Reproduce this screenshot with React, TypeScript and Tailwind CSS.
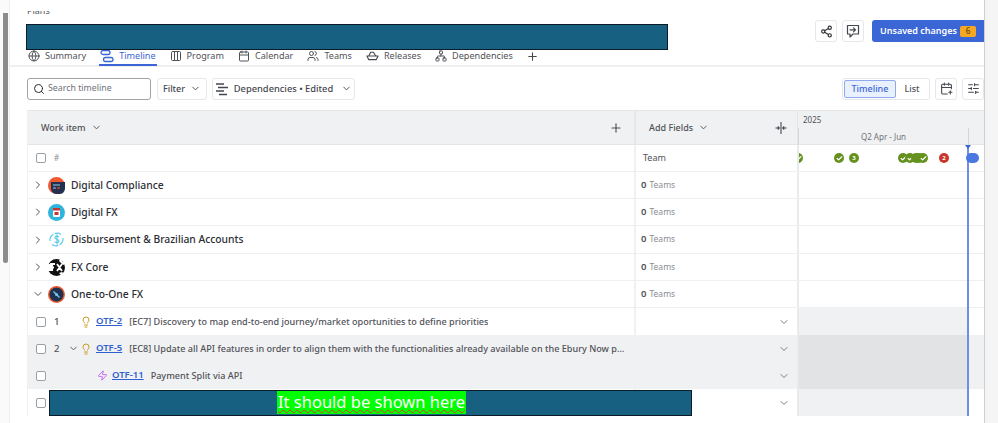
import React from "react";
import { Globe, Columns3, Calendar, Users, Network, Plus, Search, ChevronDown, ChevronRight, Lightbulb, Share2, CalendarPlus, SlidersHorizontal, Check, Zap } from "lucide-react";

const TimelineIcon = () => (
  <svg width="14" height="14" viewBox="0 0 14 14" fill="none" stroke="#3a66d6" strokeWidth="1.3">
    <rect x="1" y="1.500" width="9" height="4" rx="2" />
    <rect x="3.500" y="8.500" width="9.500" height="4" rx="2" />
  </svg>
);
const ReleaseIcon = () => (
  <svg width="13" height="13" viewBox="0 0 14 14" fill="none" stroke="#44474f" strokeWidth="1.2" strokeLinejoin="round">
    <path d="M1 7.500h12l-2 4H3z" />
    <path d="M3 7.500 5 3.500h3l2.500 4" />
  </svg>
);
const FeedbackIcon = () => (
  <svg width="14" height="14" viewBox="0 0 14 14" fill="none" stroke="#44474f" strokeWidth="1.2" strokeLinejoin="round" strokeLinecap="round">
    <path d="M4 10v3l3-3h5.500V1.500h-11V10z" />
    <path d="M4 5.800h5M7.500 3.800l2 2-2 2" />
  </svg>
);
const DependencyLines = () => (
  <svg width="14" height="14" viewBox="0 0 14 14" stroke="#44474f" strokeWidth="1.3">
    <path d="M1 2h8M3 5.500h10M1 9h8M4 12.500h8" />
  </svg>
);
const SplitIcon = () => (
  <svg width="12" height="12" viewBox="0 0 12 12" fill="none" stroke="#44474f" strokeWidth="1.1">
    <path d="M6 0v12M0.500 6h3.500M2.800 4.500 4.300 6 2.800 7.500M11.500 6H8M9.200 4.500 7.700 6l1.500 1.500" />
  </svg>
);

const Avatar = ({ kind }: { kind: string }) => {
  if (kind === "compliance")
    return (
      <svg width="17" height="17" viewBox="0 0 17 17">
        <circle cx="8.500" cy="8.500" r="8.500" fill="#f0592f" />
        <path d="M3 5h14v7a6 6 0 0 1-6 5H8a6 6 0 0 1-5-5z" fill="#24304f" />
        <path d="M5 8h7M5 11h3" stroke="#8fd3f0" strokeWidth="1.2" />
        <path d="M9 11h3" stroke="#f0592f" strokeWidth="1.2" />
      </svg>
    );
  if (kind === "digital")
    return (
      <svg width="17" height="17" viewBox="0 0 17 17">
        <circle cx="8.500" cy="8.500" r="8.500" fill="#2fb4dd" />
        <rect x="5" y="4" width="7" height="9" rx="1" fill="#fff" />
        <rect x="5" y="4" width="7" height="2.500" fill="#c8372d" />
        <rect x="6.500" y="8" width="4" height="3" fill="#c8372d" />
      </svg>
    );
  if (kind === "disb")
    return (
      <svg width="17" height="17" viewBox="0 0 17 17" fill="none" stroke="#5ccbea" strokeWidth="1.2">
        <path d="M2 10a7 7 0 0 1 11-6.500M15 7a7 7 0 0 1-11 6.500" strokeDasharray="8 1.500" />
        <path d="M11 6c-1-1.300-4-1.200-4 .7 0 2 4 1.200 4 3.300 0 1.800-3 2-4.300.6M9 3.500v10" />
      </svg>
    );
  if (kind === "core")
    return (
      <svg width="17" height="17" viewBox="0 0 17 17">
        <circle cx="8.500" cy="8.500" r="8.500" fill="#111" />
        <path d="M0 5h5v7H0zM12 0l5 5-2 1-4-4zM11 14l3-1 2 2-2 2z" fill="#fff" />
        <path d="M3 12V5h4M3 8.500h3M9 5l5 7M14 5l-5 7" stroke="#fff" strokeWidth="1.800" fill="none" />
      </svg>
    );
  return (
    <svg width="17" height="17" viewBox="0 0 17 17">
      <circle cx="8.500" cy="8.500" r="8.500" fill="#f0592f" />
      <circle cx="8.500" cy="8.500" r="7" fill="#1f3350" />
      <path d="M5.500 5.500l6 6" stroke="#7cc4e8" strokeWidth="1.400" />
      <circle cx="8.500" cy="8.500" r="1.500" fill="#7cc4e8" />
    </svg>
  );
};

const Dot = ({ x, red, label }: { x: number; red?: boolean; label?: string }) => (
  <span
    className={`absolute top-[8px] flex h-[10px] w-[10px] items-center justify-center rounded-full text-[6px] font-bold leading-none text-white ${red ? "bg-[#c9372c]" : "bg-[#65921f]"}`}
    style={{ left: x }}
  >
    {label ? label : <Check size={7} strokeWidth={4} />}
  </span>
);

const projects = [
  ["Digital Compliance", "compliance"],
  ["Digital FX", "digital"],
  ["Disbursement & Brazilian Accounts", "disb"],
  ["FX Core", "core"],
  ["One-to-One FX", "one"],
];

const Box = () => <span className="block h-[10px] w-[10px] shrink-0 rounded-[2px] border border-[#9a9ea6] bg-white" />;

const Tab = ({ icon, label, active }: { icon: React.ReactNode; label: string; active?: boolean }) => (
  <div className={`flex h-[18px] items-center gap-[5px] border-b-2 px-[1px] pb-[1px] ${active ? "border-[#3a66d6] text-[#3a66d6]" : "border-transparent text-[#505258]"}`}>
    {icon}
    <span>{label}</span>
  </div>
);

const ItemRow = ({ num, chevron, indent, icon, code, text, shaded, barBg, edgeBg }: { num?: string; chevron?: boolean; indent?: boolean; icon: React.ReactNode; code: string; text: string; shaded?: boolean; barBg: string; edgeBg: string }) => (
  <div className={`grid h-[27px] grid-cols-[606px_163px_170px_17px] ${shaded ? "bg-[#f0f1f2]" : "bg-white"}`}>
    <div className="flex min-w-0 items-center pl-[8px] pr-[5px]">
      <Box />
      <span className="w-[21px] shrink-0 pl-[8px] text-[9.500px] font-medium leading-none text-[#505258]">{num}</span>
      <span className="flex w-[12px] shrink-0 justify-center">
        {chevron && <ChevronDown size={11} color="#505258" />}
      </span>
      {indent && <span className="w-[16px] shrink-0" />}
      <span className="flex w-[14px] shrink-0 justify-center">{icon}</span>
      <span className="ml-[3px] shrink-0 whitespace-nowrap text-[9.500px] font-semibold text-[#2f5fd0] underline">{code}</span>
      <span className="ml-[7px] min-w-0 truncate text-[9.100px] font-medium text-[#505258]">{text}</span>
    </div>
    <div className="flex items-center justify-end border-l-2 border-[#f0f1f2] pr-[7px]">
      <ChevronDown size={12} color="#7a7d84" />
    </div>
    <div className={`border-l-2 border-[#e9eaec] ${barBg}`} />
    <div className={edgeBg} />
  </div>
);

export default function App() {
  return (
    <div className="relative flex h-[423px] w-[998px] overflow-hidden bg-white text-[#44474f]" style={{ fontFamily: '"Noto Sans", sans-serif' }}>
      {/* left scrollbar gutter */}
      <div className="w-[10px] shrink-0 border-r border-[#eeeeee] bg-[#fafafa] pl-[3px] pt-[13px]">
        <div className="h-[250px] w-[5px] rounded-b-full bg-[#8c8c8c]" />
      </div>

      <div className="flex h-[416px] w-[974px] shrink-0 flex-col overflow-hidden">
        {/* heading */}
        <div className="relative flex h-[67px] shrink-0 flex-col border-b-2 border-[#eeeff0] pl-[17px]">
          <div className="mt-[11px] h-[6px] overflow-hidden">
            <div className="-mt-[6px] text-[9px] leading-[11px] text-[#505258]">Plans</div>
          </div>
          <div className="absolute right-0 top-[20px] flex items-center gap-[5px]">
            <span className="flex h-[22px] w-[22px] items-center justify-center rounded-[3px] border border-[#e6e7e9]">
              <Share2 size={13} color="#2c2e33" />
            </span>
            <span className="flex h-[22px] w-[22px] items-center justify-center rounded-[3px] border border-[#e6e7e9]">
              <FeedbackIcon />
            </span>
            <span className="ml-[3px] flex h-[22px] w-[112px] items-center gap-[3px] whitespace-nowrap rounded-l-[3px] bg-[#3a66d6] pl-[8px] text-[9px] font-semibold text-white">
              Unsaved changes
              <span className="flex h-[11px] w-[16px] items-center justify-center rounded-[2px] bg-[#f5a623] text-[8px] font-medium text-[#6b4a00]">6</span>
            </span>
          </div>
          <div className="-mb-[1px] mt-auto flex items-center gap-[12px] text-[9.100px] leading-none">
            <Tab icon={<Globe size={12} />} label="Summary" />
            <Tab icon={<TimelineIcon />} label="Timeline" active />
            <Tab icon={<Columns3 size={12} />} label="Program" />
            <Tab icon={<Calendar size={12} />} label="Calendar" />
            <Tab icon={<Users size={12} />} label="Teams" />
            <Tab icon={<ReleaseIcon />} label="Releases" />
            <Tab icon={<Network size={12} />} label="Dependencies" />
            <Plus size={13} color="#44474f" className="mb-[2px]" />
          </div>
        </div>

        {/* toolbar */}
        <div className="flex h-[43px] shrink-0 items-center pl-[17px]">
          <div className="flex h-[22px] w-[124px] items-center gap-[3px] rounded-[3px] border border-[#a0a3a8] pl-[5px] text-[8.800px] text-[#6f7278]">
            <Search size={12} color="#2c2e33" />
            Search timeline
          </div>
          <div className="ml-[6px] flex h-[22px] w-[50px] items-center justify-center gap-[5px] rounded-[3px] border border-[#e6e7e9] text-[9px] font-medium text-[#44474f]">
            Filter <ChevronDown size={11} />
          </div>
          <div className="ml-[5px] flex h-[22px] w-[143px] items-center justify-center gap-[5px] whitespace-nowrap rounded-[3px] border border-[#e6e7e9] text-[9.300px] font-medium text-[#44474f]">
            <DependencyLines />
            Dependencies • Edited
            <ChevronDown size={11} className="ml-[3px]" />
          </div>
          <div className="ml-auto flex items-center gap-[5px]">
            <div className="flex h-[22px] w-[88px] items-center rounded-[3px] border border-[#e6e7e9] p-[1px] text-[9px] font-medium">
              <span className="flex h-full w-[52px] items-center justify-center rounded-[2px] border border-[#8fa9ec] bg-[#e9f0fe] text-[#3a66d6]">Timeline</span>
              <span className="flex-1 text-center text-[#505258]">List</span>
            </div>
            <span className="flex h-[22px] w-[22px] items-center justify-center rounded-[3px] border border-[#e6e7e9]">
              <CalendarPlus size={13} color="#44474f" />
            </span>
            <span className="flex h-[22px] w-[22px] items-center justify-center rounded-[3px] border border-[#e6e7e9]">
              <SlidersHorizontal size={13} color="#44474f" />
            </span>
          </div>
        </div>

        {/* table */}
        <div className="relative ml-[17px] flex flex-col border-l border-[#eeeff0]">
          <div className="grid h-[35px] grid-cols-[606px_163px_187px] border-y border-[#e4e5e7] bg-[#f0f1f2] text-[9px] font-medium text-[#505258]">
            <div className="flex items-center justify-between pl-[13px] pr-[11px]">
              <span className="flex items-center gap-[5px]">Work item <ChevronDown size={11} /></span>
              <Plus size={14} color="#505258" />
            </div>
            <div className="flex items-center justify-between border-l-2 border-[#e6e7e9] pl-[13px] pr-[10px]">
              <span className="flex items-center gap-[5px]">Add Fields <ChevronDown size={11} /></span>
              <SplitIcon />
            </div>
            <div className="relative border-l border-[#e4e5e7] font-normal">
              <div className="pl-[5px] pt-[3px] text-[8px] leading-[11px]">2025</div>
              <div className="absolute left-[0px] top-[17px] flex h-[17px] w-[171px] items-center justify-center border-x border-[#d5d6d9] text-[8px] text-[#6f7278]">Q2 Apr - Jun</div>
            </div>
          </div>

          <div className="grid h-[27px] grid-cols-[606px_163px_187px] border-b border-[#eeeff0] text-[9px]">
            <div className="flex items-center gap-[8px] pl-[8px]">
              <Box />
              <span className="text-[8px] text-[#8a8d93]">#</span>
            </div>
            <div className="flex items-center border-l-2 border-[#f0f1f2] pl-[7px] text-[#505258]">Team</div>
            <div className="relative overflow-hidden border-l-2 border-[#e9eaec]">
              <Dot x={-6} />
              <Dot x={35} />
              <Dot x={50} label="3" />
              <Dot x={99} />
              <Dot x={106} />
              <Dot x={112} label=" " />
              <Dot x={115} label=" " />
              <Dot x={119} />
              <Dot x={140} red label="2" />
            </div>
          </div>

          {projects.map(([name, kind]) => (
            <div key={name} className={`grid grid-cols-[606px_163px_187px] border-b border-[#eeeff0] last:border-b-0 ${kind === "disb" ? "h-[28px]" : "h-[27px]"}`}>
              <div className="flex items-center pl-[2px]">
                <span className="flex w-[15px] justify-center">
                  {kind === "one" ? <ChevronDown size={12} color="#505258" /> : <ChevronRight size={12} color="#505258" />}
                </span>
                <span className="ml-[3px] flex w-[17px] justify-center"><Avatar kind={kind} /></span>
                <span className={`ml-[6px] text-[10.300px] font-medium text-[#2c2e33] ${kind === "disb" ? "" : "pt-[2px]"}`}>{name}</span>
              </div>
              <div className="flex items-center border-l-2 border-[#f0f1f2] pl-[5px] text-[8.500px]">
                <span className="text-[9.500px] font-semibold text-[#505258]">0</span>
                <span className="ml-[3px] text-[#8a8d93]">Teams</span>
              </div>
              <div className="border-l-2 border-[#e9eaec]" />
            </div>
          ))}

          <ItemRow num="1" icon={<Lightbulb size={12} color="#c99a1e" />} code="OTF-2" text="[EC7] Discovery to map end-to-end journey/market oportunities to define priorities" barBg="bg-[#f0f1f2]" edgeBg="bg-white" />
          <ItemRow num="2" chevron shaded icon={<Lightbulb size={12} color="#c99a1e" />} code="OTF-5" text="[EC8] Update all API features in order to align them with the functionalities already available on the Ebury Now po..." barBg="bg-[#e2e3e5]" edgeBg="bg-[#f0f1f2]" />
          <ItemRow indent shaded icon={<Zap size={11} color="#bf63f3" />} code="OTF-11" text="Payment Split via API" barBg="bg-[#e2e3e5]" edgeBg="bg-[#f0f1f2]" />
          <ItemRow icon={null} code="" text="" barBg="bg-[#f0f1f2]" edgeBg="bg-white" />

          {/* today marker */}
          <div className="absolute bottom-0 left-[939px] top-[35px] w-[1.500px] bg-[#6f8fe6]" />
          <div className="absolute left-[937px] top-[35px] h-0 w-0 border-x-[3px] border-t-[4px] border-x-transparent border-t-[#3a66d6]" />
          <div className="absolute left-[938px] top-[43px] h-[10px] w-[13px] rounded-full bg-[#4a78e0]" />
        </div>
      </div>

      {/* right gutter */}
      <div className="w-[14px] shrink-0 border-l border-[#cfcfcf] bg-[#f5f5f5]" />

      {/* redaction overlays */}
      <div className="absolute left-[26px] top-[24px] h-[26px] w-[642px] border-[1.500px] border-[#0b1c26] bg-[#176082]" />
      <div className="absolute left-[49px] top-[390px] h-[26px] w-[643px] border-[1.500px] border-[#0b1c26] bg-[#176082]">
        <div className="ml-[227px] flex h-[23px] w-[189px] items-center justify-center whitespace-nowrap bg-[#00ff00] text-[16.500px] leading-none text-white underline decoration-[#d33] decoration-wavy decoration-1">
          It should be shown here
        </div>
      </div>
    </div>
  );
}
